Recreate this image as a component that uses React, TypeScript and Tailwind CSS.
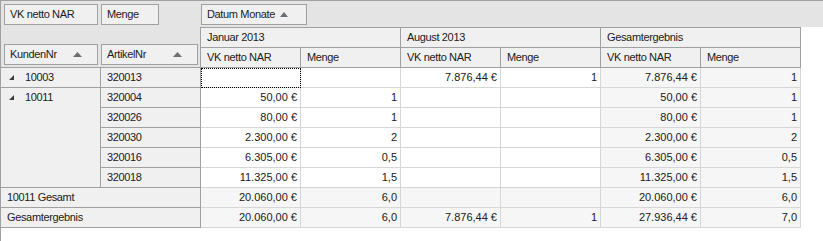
import React from "react";

const FONT = { fontFamily: '"Liberation Sans", Arial, sans-serif' };

function SortUp({ w = 9 }: { w?: number }) {
  return (
    <svg width={w} height={5} viewBox={`0 0 ${w} 5`} className="shrink-0">
      <path d={`M0 5 L${w / 2} 0 L${w} 5 Z`} fill="#6e6e6e" />
    </svg>
  );
}

function Expand() {
  return (
    <svg width={6} height={6} viewBox="0 0 6 6" className="shrink-0">
      <path d="M5 0 L5 5 L0 5 Z" fill="#3c3c3c" />
    </svg>
  );
}

type Row = { k?: string; a: string; v: string[] };

const detail: Row[] = [
  { k: "10003", a: "320013", v: ["", "", "7.876,44 €", "1", "7.876,44 €", "1"] },
  { k: "10011", a: "320004", v: ["50,00 €", "1", "", "", "50,00 €", "1"] },
  { a: "320026", v: ["80,00 €", "1", "", "", "80,00 €", "1"] },
  { a: "320030", v: ["2.300,00 €", "2", "", "", "2.300,00 €", "2"] },
  { a: "320016", v: ["6.305,00 €", "0,5", "", "", "6.305,00 €", "0,5"] },
  { a: "320018", v: ["11.325,00 €", "1,5", "", "", "11.325,00 €", "1,5"] },
];

const totals = [
  { label: "10011 Gesamt", v: ["20.060,00 €", "6,0", "", "", "20.060,00 €", "6,0"] },
  { label: "Gesamtergebnis", v: ["20.060,00 €", "6,0", "7.876,44 €", "1", "27.936,44 €", "7,0"] },
];

const btn =
  "h-[21px] border border-[#a0a0a0] bg-[#f0f0f0] flex items-center pl-[5px] tracking-[-0.35px] text-[#202020]";

const hdrCell =
  "border-r border-b border-[#a0a0a0] bg-[#f0f0f0] flex items-center pl-[6px] tracking-[-0.35px] text-[#202020]";

const rowHdr =
  "border-r border-b border-[#a0a0a0] bg-[#f0f0f0] text-[#202020] tracking-[-0.35px]";

function DataCell({ value, gray, focus }: { value: string; gray: boolean; focus?: boolean }) {
  return (
    <div
      className={
        "border-r border-b border-[#d6d6d6] flex items-center justify-end pr-[3px] text-[#202020] " +
        (gray ? "bg-[#f6f6f6] " : "bg-white ") +
        (focus ? "outline-1 outline-dotted outline-black -outline-offset-1" : "")
      }
    >
      {value}
    </div>
  );
}

export default function App() {
  return (
    <div
      className="w-[823px] h-[241px] bg-white border-l border-t border-[#a0a0a0] text-[11px] leading-none overflow-hidden"
      style={FONT}
    >
      {/* filter area */}
      <div className="h-[26px] bg-[#e4e4e4] flex pt-[3px]">
        <div className="w-[200px] flex gap-[3px] pl-[3px]">
          <div className={btn + " w-[94px]"}>VK netto NAR</div>
          <div className={btn + " w-[58px]"}>Menge</div>
        </div>
        <div className={btn + " w-[106px] gap-[5px]"}>
          <span>Datum Monate</span>
          <SortUp w={8} />
        </div>
      </div>

      {/* pivot grid */}
      <div className="grid grid-cols-[100px_100px_repeat(6,100px)] grid-rows-[21px_20px_repeat(8,20px)]">
        {/* row/col header block */}
        <div className="col-span-2 row-span-2 bg-[#e4e4e4] border-r border-b border-[#a0a0a0] flex items-end gap-[3px] pl-[3px] pb-[2px]">
          <div className={btn + " w-[94px] justify-between pr-[15px]"}>
            <span>KundenNr</span>
            <SortUp />
          </div>
          <div className={btn + " w-[97px] justify-between pr-[15px]"}>
            <span>ArtikelNr</span>
            <SortUp />
          </div>
        </div>
        <div className={hdrCell + " col-span-2 border-t"}>Januar 2013</div>
        <div className={hdrCell + " col-span-2 border-t"}>August 2013</div>
        <div className={hdrCell + " col-span-2 border-t"}>Gesamtergebnis</div>

        <div className={hdrCell}>VK netto NAR</div>
        <div className={hdrCell}>Menge</div>
        <div className={hdrCell}>VK netto NAR</div>
        <div className={hdrCell}>Menge</div>
        <div className={hdrCell}>VK netto NAR</div>
        <div className={hdrCell}>Menge</div>

        {detail.map((r, i) => (
          <React.Fragment key={r.a}>
            {r.k && (
              <div className={rowHdr + (i === 1 ? " row-span-5" : "")}>
                <div className="h-[19px] flex items-center pl-[8px] gap-[10px]">
                  <Expand />
                  <span>{r.k}</span>
                </div>
              </div>
            )}
            <div className={rowHdr + " flex items-center pl-[6px]"}>{r.a}</div>
            {r.v.map((v, j) => (
              <DataCell key={j} value={v} gray={j >= 4} focus={i === 0 && j === 0} />
            ))}
          </React.Fragment>
        ))}

        {totals.map((t) => (
          <React.Fragment key={t.label}>
            <div className={rowHdr + " col-span-2 flex items-center pl-[6px]"}>{t.label}</div>
            {t.v.map((v, j) => (
              <DataCell key={j} value={v} gray />
            ))}
          </React.Fragment>
        ))}
      </div>
    </div>
  );
}
